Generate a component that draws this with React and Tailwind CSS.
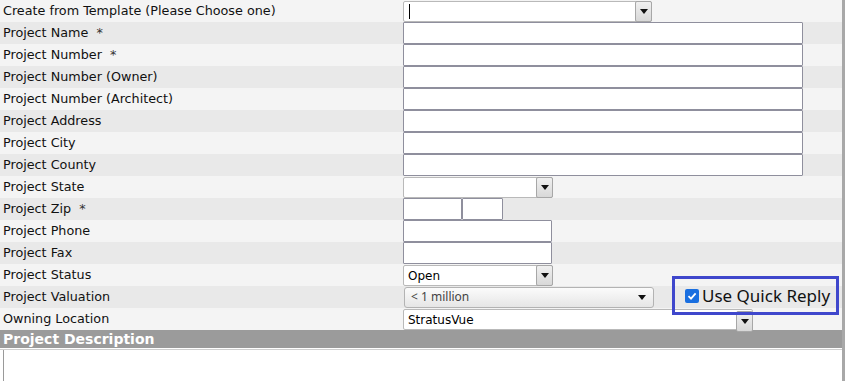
import React from "react";

const font = { fontFamily: '"DejaVu Sans", Tahoma, sans-serif' };

function Arrow({ className = "" }) {
  return (
    <svg width="8" height="5" viewBox="0 0 8 5" className={className}>
      <path d="M0 0H8L4 5Z" fill="#111" />
    </svg>
  );
}

function Combo({ w, text, cursor, tall }) {
  return (
    <div className={`relative flex items-stretch ${w} h-[21px] bg-white border border-[#b9b9b9] rounded-[2px]`}>
      <div className="flex-1 flex items-center pl-[4px] text-[12px] text-black pt-[1px]">
        {cursor ? <span className="w-px h-[15px] bg-black ml-[1px]" /> : text}
      </div>
      <div
        className={`w-[17px] -mr-px border border-[#a7a7a7] rounded-[2px] bg-gradient-to-b from-[#f0f0f0] to-[#d8d8d8] flex items-center justify-center ${
          tall ? "mt-px -mb-[3px]" : "-my-px"
        }`}
      >
        <Arrow />
      </div>
    </div>
  );
}

function TextInput({ w }) {
  return <div className={`${w} h-[22px] bg-white border border-[#8f8f9d] rounded-[1px]`} />;
}

function Row({ label, req, dark, children }) {
  return (
    <div className={`flex h-[22px] ${dark ? "bg-[#e9e9e9]" : "bg-[#f4f4f4]"}`}>
      <div className="w-[403px] pl-[3px] flex items-center text-[12.75px] text-[#111] whitespace-pre">
        {label}
        {req ? <span className="text-[#333]">{"  *"}</span> : null}
      </div>
      <div className="flex-1 flex items-center">{children}</div>
    </div>
  );
}

export default function App() {
  return (
    <div className="w-[845px] h-[381px] bg-white overflow-hidden relative" style={font}>
      <div className="border-r-[3px] border-[#a8a8a8] w-[845px]">
        <Row label="Create from Template (Please Choose one)">
          <Combo w="w-[249px]" cursor />
        </Row>
        <Row label="Project Name" req dark>
          <TextInput w="w-[400px]" />
        </Row>
        <Row label="Project Number" req>
          <TextInput w="w-[400px]" />
        </Row>
        <Row label="Project Number (Owner)" dark>
          <TextInput w="w-[400px]" />
        </Row>
        <Row label="Project Number (Architect)">
          <TextInput w="w-[400px]" />
        </Row>
        <Row label="Project Address" dark>
          <TextInput w="w-[400px]" />
        </Row>
        <Row label="Project City">
          <TextInput w="w-[400px]" />
        </Row>
        <Row label="Project County" dark>
          <TextInput w="w-[400px]" />
        </Row>
        <Row label="Project State">
          <Combo w="w-[150px]" text="" />
        </Row>
        <Row label="Project Zip" req dark>
          <TextInput w="w-[59px]" />
          <TextInput w="w-[41px]" />
        </Row>
        <Row label="Project Phone">
          <TextInput w="w-[149px]" />
        </Row>
        <Row label="Project Fax" dark>
          <TextInput w="w-[149px]" />
        </Row>
        <Row label="Project Status">
          <Combo w="w-[150px]" text="Open" />
        </Row>
        <Row label="Project Valuation" dark>
          <div
            className="ml-px w-[250px] h-[21px] border border-[#b3b3b3] rounded-[3px] bg-gradient-to-b from-[#fbfbfb] to-[#e6e6e6] flex items-center justify-between pl-[6px] pr-[7px] text-[12px] text-[#444]"
            style={{ fontFamily: '"Noto Sans", "Open Sans", sans-serif' }}
          >
            <span>&lt; 1 million</span>
            <Arrow />
          </div>
        </Row>
        <Row label="Owning Location">
          <Combo w="w-[350px]" text="StratusVue" tall />
        </Row>
        <div className="h-[18px] bg-[#9b9b9b] pl-[3px] flex items-center text-[14px] font-bold text-white leading-none">
          Project Description
        </div>
        <div className="h-px bg-[#cfcfcf] mt-px" />
        <div className="ml-[3px] h-[40px] border-l border-[#9a9a9a] bg-white" />
      </div>

      <div className="absolute left-[672px] top-[276px] w-[167px] h-[39px] border-[3px] border-[#3f47cc] flex items-center pl-[10px] gap-[3px]">
        <div className="w-[14px] h-[14px] rounded-[2px] bg-[#1a6fe0] flex items-center justify-center">
          <svg width="10" height="10" viewBox="0 0 10 10">
            <path d="M1.5 5.2L4 7.6L8.6 2.4" stroke="white" strokeWidth="1.8" fill="none" />
          </svg>
        </div>
        <span className="text-[17px] text-[#111] leading-none" style={{ fontFamily: '"Noto Sans", sans-serif' }}>
          Use Quick Reply
        </span>
      </div>
    </div>
  );
}
